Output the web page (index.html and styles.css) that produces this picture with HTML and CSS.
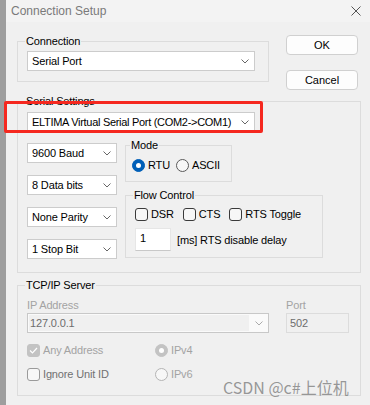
FILE: index.html
```html
<!DOCTYPE html>
<html lang="en">
<head>
    <meta charset="UTF-8">
    <title>Connection Setup</title>
    <link rel="stylesheet" href="styles.css">
</head>
<body>
    <div class="screen">
        <div class="backdrop"></div>
        <div class="dialog">
            <div class="titlebar">
                <span class="title">Connection Setup</span>
                <svg class="close" width="10" height="10" viewBox="0 0 10 10">
                    <path d="M0.5 0.5 L9.5 9.5 M9.5 0.5 L0.5 9.5" stroke="#555" stroke-width="1" fill="none"/>
                </svg>
            </div>

            <div class="content">
                <div class="top-row">
                    <fieldset class="group connection">
                        <legend>Connection</legend>
                        <div class="combo wide">
                            <span>Serial Port</span>
                            <svg class="chev" width="8" height="5" viewBox="0 0 8 5"><path d="M0.5 0.5 L4 4 L7.5 0.5" stroke="#666" fill="none"/></svg>
                        </div>
                    </fieldset>
                    <div class="buttons">
                        <button class="btn">OK</button>
                        <button class="btn">Cancel</button>
                    </div>
                </div>

                <fieldset class="group serial">
                    <legend>Serial Settings</legend>
                    <div class="combo wide">
                        <span class="tight">ELTIMA Virtual Serial Port (COM2-&gt;COM1)</span>
                        <svg class="chev" width="8" height="5" viewBox="0 0 8 5"><path d="M0.5 0.5 L4 4 L7.5 0.5" stroke="#666" fill="none"/></svg>
                    </div>
                    <div class="serial-grid">
                        <div class="stack">
                            <div class="combo small"><span>9600 Baud</span><svg class="chev" width="8" height="5" viewBox="0 0 8 5"><path d="M0.5 0.5 L4 4 L7.5 0.5" stroke="#666" fill="none"/></svg></div>
                            <div class="combo small"><span>8 Data bits</span><svg class="chev" width="8" height="5" viewBox="0 0 8 5"><path d="M0.5 0.5 L4 4 L7.5 0.5" stroke="#666" fill="none"/></svg></div>
                            <div class="combo small"><span>None Parity</span><svg class="chev" width="8" height="5" viewBox="0 0 8 5"><path d="M0.5 0.5 L4 4 L7.5 0.5" stroke="#666" fill="none"/></svg></div>
                            <div class="combo small"><span>1 Stop Bit</span><svg class="chev" width="8" height="5" viewBox="0 0 8 5"><path d="M0.5 0.5 L4 4 L7.5 0.5" stroke="#666" fill="none"/></svg></div>
                        </div>
                        <div class="side">
                            <fieldset class="group mode">
                                <legend>Mode</legend>
                                <div class="row radios">
                                    <span class="opt"><span class="radio on"></span>RTU</span>
                                    <span class="opt"><span class="radio"></span>ASCII</span>
                                </div>
                            </fieldset>
                            <fieldset class="group flow">
                                <legend>Flow Control</legend>
                                <div class="row checks">
                                    <span class="opt"><span class="check"></span>DSR</span>
                                    <span class="opt"><span class="check"></span>CTS</span>
                                    <span class="opt"><span class="check"></span>RTS Toggle</span>
                                </div>
                                <div class="row delay">
                                    <div class="num">1</div>
                                    <span class="delay-text">[ms] RTS disable delay</span>
                                </div>
                            </fieldset>
                        </div>
                    </div>
                </fieldset>

                <fieldset class="group tcp">
                    <legend>TCP/IP Server</legend>
                    <div class="tcp-grid">
                        <div>
                            <div class="field-label">IP Address</div>
                            <div class="combo disabled">
                                <span class="combo-text">127.0.0.1</span>
                                <span class="chev-box"><svg class="chev" width="8" height="5" viewBox="0 0 8 5"><path d="M0.5 0.5 L4 4 L7.5 0.5" stroke="#aaa" fill="none"/></svg></span>
                            </div>
                        </div>
                        <div>
                            <div class="field-label">Port</div>
                            <div class="port-input">502</div>
                        </div>
                    </div>
                    <div class="options">
                        <span class="opt muted"><span class="check dis-on"><svg width="9" height="7" viewBox="0 0 9 7"><path d="M1 3.5 L3.5 6 L8 1" stroke="#fff" stroke-width="1.2" fill="none"/></svg></span>Any Address</span>
                        <span class="opt muted"><span class="radio dis-on"></span>IPv4</span>
                        <span class="opt dim"><span class="check off"></span>Ignore Unit ID</span>
                        <span class="opt muted"><span class="radio off"></span>IPv6</span>
                    </div>
                </fieldset>
            </div>
        </div>

        <div class="highlight"></div>
        <div class="watermark">CSDN @c#上位机</div>
    </div>
</body>
</html>
```

FILE: styles.css
```css
body {
    margin: 0;
    font-family: "Liberation Sans", Arial, sans-serif;
    font-size: 11px;
    letter-spacing: -0.15px;
    color: #000;
    background: #f0f0f0;
}

.screen {
    position: relative;
    width: 370px;
    height: 405px;
    overflow: hidden;
    display: flex;
}

.backdrop {
    width: 6px;
    flex: none;
    background: #9e9e9e;
}

.dialog {
    flex: 1;
    background: #f0f0f0;
}

.titlebar {
    height: 22px;
    display: flex;
    align-items: center;
    justify-content: space-between;
    padding: 0 9px 0 5px;
    background: #f3f3f3;
}

.title {
    font-size: 12px;
    letter-spacing: 0;
    color: #7a7a7a;
}

.content {
    padding: 12px 0 0 11px;
}

.top-row {
    display: flex;
    align-items: flex-start;
    gap: 17px;
}

.group {
    margin: 0;
    min-width: 0;
    box-sizing: border-box;
    border: 1px solid #dcdcdc;
}

legend {
    padding: 0 1px;
    margin-left: -2px;
    line-height: 14px;
}

.connection {
    width: 252px;
    padding: 3px 9px 10px 9px;
}

.buttons {
    display: flex;
    flex-direction: column;
    gap: 15px;
    margin-top: 1px;
}

.btn {
    width: 72px;
    height: 20px;
    box-sizing: border-box;
    padding: 0;
    border: 1px solid #d0d0d0;
    border-radius: 4px;
    background: #fdfdfd;
    font: inherit;
    color: #000;
}

.combo {
    display: flex;
    align-items: center;
    justify-content: space-between;
    height: 20px;
    box-sizing: border-box;
    border: 1px solid #cccccc;
    background: #fff;
    padding: 0 5px 0 4px;
    white-space: nowrap;
}

.combo.wide {
    width: 228px;
}

.combo.small {
    width: 90px;
}

.tight {
    letter-spacing: -0.3px;
}

.chev {
    display: block;
    flex: none;
}

.serial {
    width: 344px;
    margin-top: 4px;
    padding: 4px 9px 13px 9px;
}

.serial-grid {
    display: grid;
    grid-template-columns: 90px 198px;
    column-gap: 8px;
    margin-top: 6px;
}

.stack {
    display: flex;
    flex-direction: column;
    gap: 12px;
    padding-top: 5px;
}

.mode {
    width: 107px;
    padding: 6px 6px 9px 6px;
}

.flow {
    width: 198px;
    margin-top: 6px;
    padding: 5px 9px 6px 9px;
}

.row {
    display: flex;
    align-items: center;
}

.radios {
    gap: 6px;
}

.checks {
    gap: 9px;
}

.opt {
    display: inline-flex;
    align-items: center;
    gap: 3px;
    line-height: 14px;
    white-space: nowrap;
}

.radio {
    width: 13px;
    height: 13px;
    flex: none;
    box-sizing: border-box;
    border: 1px solid #5a5a5a;
    border-radius: 50%;
    background: #f7f7f7;
    display: flex;
    align-items: center;
    justify-content: center;
}

.radio.on {
    background: #005fb8;
    border-color: #005fb8;
}

.radio.on::after,
.radio.dis-on::after {
    content: "";
    width: 5px;
    height: 5px;
    border-radius: 50%;
    background: #fff;
}

.radio.dis-on {
    background: #c3c3c3;
    border-color: #c3c3c3;
}

.radio.off {
    border-color: #b4b4b4;
}

.check {
    width: 13px;
    height: 13px;
    flex: none;
    box-sizing: border-box;
    border: 1px solid #3a3a3a;
    border-radius: 3px;
    background: #f7f7f7;
    display: flex;
    align-items: center;
    justify-content: center;
}

.check.dis-on {
    background: #c3c3c3;
    border-color: #c3c3c3;
}

.check.off {
    border-color: #9a9a9a;
}

.delay {
    margin-top: 7px;
}

.num {
    width: 36px;
    height: 23px;
    box-sizing: border-box;
    padding: 2px 4px;
    background: #fff;
    border: 1px solid #e6e6e6;
    border-bottom-color: #c8c8c8;
    line-height: 14px;
}

.delay-text {
    margin-left: 6px;
}

.tcp {
    width: 344px;
    margin-top: 5px;
    padding: 7px 9px 14px 9px;
}

.tcp-grid {
    display: grid;
    grid-template-columns: 242px 63px;
    column-gap: 17px;
}

.field-label {
    color: #a3a3a3;
    line-height: 13px;
    margin-bottom: 1px;
}

.combo.disabled {
    width: 242px;
    padding: 0;
    background: #fafafa;
    border-color: #c8c8c8;
}

.combo-text {
    flex: 1;
    align-self: stretch;
    margin: 1px 0 1px 1px;
    padding-left: 1px;
    display: flex;
    align-items: center;
    background: #f0f0f0;
    color: #6d6d6d;
}

.chev-box {
    width: 19px;
    display: flex;
    justify-content: center;
}

.port-input {
    height: 20px;
    margin-top: 1px;
    box-sizing: border-box;
    padding-left: 3px;
    border: 1px solid #dcdcdc;
    background: #f0f0f0;
    color: #6d6d6d;
    line-height: 18px;
}

.options {
    display: grid;
    grid-template-columns: 128px auto;
    row-gap: 10px;
    margin-top: 10px;
}

.muted {
    color: #a3a3a3;
}

.dim {
    color: #707070;
}

.highlight {
    position: absolute;
    left: 4px;
    top: 101px;
    width: 259px;
    height: 32px;
    box-sizing: border-box;
    border: 3px solid #f5281f;
    border-radius: 2px;
}

.watermark {
    position: absolute;
    left: 223px;
    top: 378px;
    font-family: "Noto Sans CJK SC", sans-serif;
    font-size: 16px;
    line-height: 18px;
    letter-spacing: 0;
    color: rgba(120, 120, 120, 0.75);
    white-space: nowrap;
}
```
